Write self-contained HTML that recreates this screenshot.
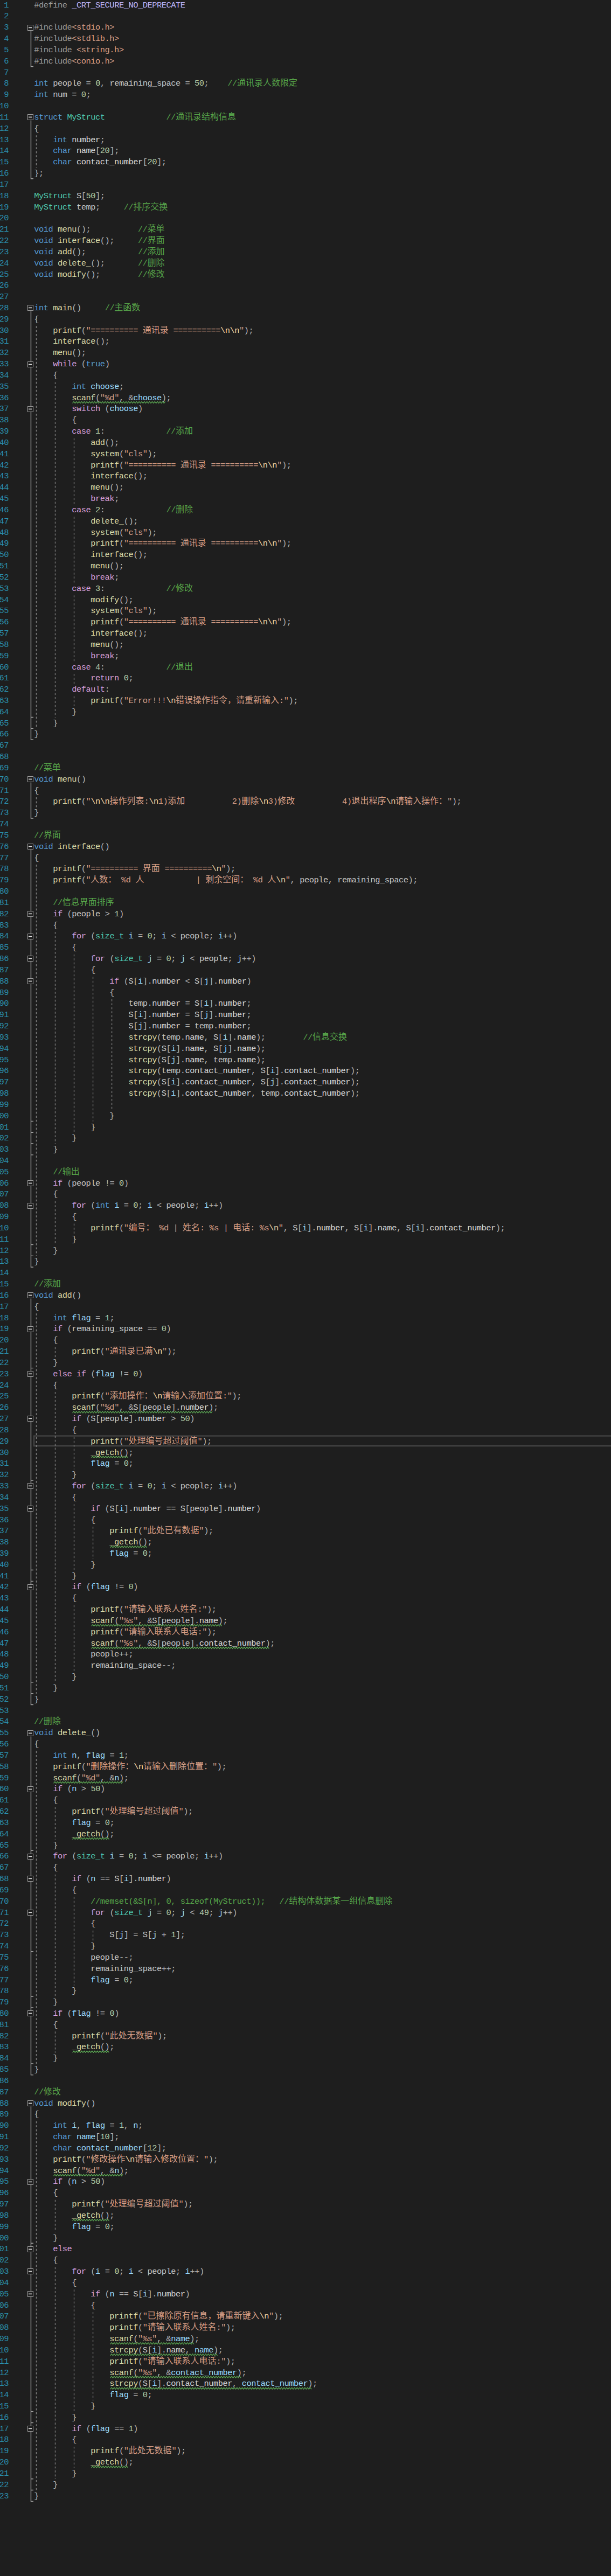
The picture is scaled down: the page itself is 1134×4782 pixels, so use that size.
<!DOCTYPE html>
<html lang="zh"><head><meta charset="utf-8"><title>code</title><style>
html,body{margin:0;padding:0;background:#1e1e1e;}
body{width:1134px;height:4782px;position:relative;overflow:hidden;font-family:"Liberation Mono","Noto Sans CJK SC",monospace;font-size:15.4px;letter-spacing:-0.4785px;color:#dcdcdc;}
svg{position:absolute;left:0;top:0;}
.r{position:absolute;left:0;height:20.829px;line-height:20.829px;white-space:pre;width:1134px;}
.ln{position:absolute;right:1118.03px;top:0;color:#2b91af;}
.cd{position:absolute;left:63.24px;top:0;}
.z{font-family:"Liberation Mono","Noto Sans CJK SC",sans-serif;font-size:16.0px;letter-spacing:0;line-height:0;}
.pp{color:#9b9b9b}.mac{color:#beb7ff}.s{color:#d69d85}.e{color:#f5d5a5}.c{color:#57a64a}
.k{color:#569cd6}.ct{color:#d8a0df}.t{color:#4ec9b0}.f{color:#dcdcaa}.l{color:#9cdcfe}
.g{color:#c8c8c8}.m{color:#dadada}.n{color:#b5cea8}.p{color:#b4b4b4}.d{color:#dcdcdc}
</style></head><body>
<svg width="1134" height="4782" viewBox="0 0 1134 4782"><rect x="63.1" y="2665.61" width="1200" height="18.6" fill="none" stroke="#464646" stroke-width="2.2"/>
<path d="M67.40 251.15V311.33M67.40 605.24V1352.79M102.45 709.39V1331.96M137.50 813.53V936.21M137.50 959.33V1082.01M137.50 1105.14V1227.81M137.50 1250.94V1269.47M137.50 1292.60V1311.13M67.40 1480.06V1498.59M67.40 1605.03V2331.75M102.45 1730.01V2123.46M137.50 1771.67V2102.63M172.56 1813.32V2081.80M207.61 1854.98V2060.97M102.45 2229.90V2310.92M137.50 2271.56V2290.09M67.40 2438.19V3144.08M102.45 2500.68V2519.21M102.45 2584.00V3123.25M137.50 2667.31V2727.50M137.50 2792.29V2914.96M172.56 2833.94V2894.13M137.50 2979.75V3102.42M67.40 3250.52V3831.44M102.45 3354.67V3414.86M102.45 3479.64V3706.46M137.50 3521.30V3685.63M172.56 3583.79V3602.32M102.45 3771.25V3810.61M67.40 3937.88V4622.94M102.45 4083.68V4143.87M102.45 4208.66V4602.11M137.50 4250.32V4477.14M172.56 4291.97V4456.31M137.50 4541.92V4581.28" stroke="#858585" stroke-width="1.3" stroke-dasharray="3.7 3.7" fill="none"/>
<path d="M57.45 57.60V123.47H62M57.45 223.60V331.76H62M57.45 577.60V1373.21H62M57.45 1452.60V1519.02H62M57.45 1577.60V2352.18H62M57.45 2410.60V3164.51H62M57.45 3223.60V3851.87H62M57.45 3910.60V4643.37H62M57.45 1352.38H62M57.45 1331.56H62M57.45 2143.89H62M57.45 2123.06H62M57.45 2102.23H62M57.45 2081.40H62M57.45 2331.35H62M57.45 2310.52H62M57.45 2539.64H62M57.45 3143.68H62M57.45 2747.93H62M57.45 2935.39H62M57.45 2914.56H62M57.45 3122.85H62M57.45 3435.29H62M57.45 3726.89H62M57.45 3706.06H62M57.45 3622.75H62M57.45 3831.04H62M57.45 4164.30H62M57.45 4622.54H62M57.45 4497.56H62M57.45 4476.73H62M57.45 4601.71H62" stroke="#a6a6a6" stroke-width="1.4" fill="none"/>
<rect x="51.50" y="46.50" width="10.00" height="10.00" fill="#1e1e1e" stroke="#a0a0a0" stroke-width="1"/>
<rect x="53.00" y="50.60" width="6.2" height="1.6" fill="#e4e4e4"/>
<rect x="51.50" y="212.50" width="10.00" height="10.00" fill="#1e1e1e" stroke="#a0a0a0" stroke-width="1"/>
<rect x="53.00" y="216.60" width="6.2" height="1.6" fill="#e4e4e4"/>
<rect x="51.50" y="566.50" width="10.00" height="10.00" fill="#1e1e1e" stroke="#a0a0a0" stroke-width="1"/>
<rect x="53.00" y="570.60" width="6.2" height="1.6" fill="#e4e4e4"/>
<rect x="51.50" y="671.50" width="10.00" height="10.00" fill="#1e1e1e" stroke="#a0a0a0" stroke-width="1"/>
<rect x="53.00" y="675.60" width="6.2" height="1.6" fill="#e4e4e4"/>
<rect x="51.50" y="754.50" width="10.00" height="10.00" fill="#1e1e1e" stroke="#a0a0a0" stroke-width="1"/>
<rect x="53.00" y="758.60" width="6.2" height="1.6" fill="#e4e4e4"/>
<rect x="51.50" y="1441.50" width="10.00" height="10.00" fill="#1e1e1e" stroke="#a0a0a0" stroke-width="1"/>
<rect x="53.00" y="1445.60" width="6.2" height="1.6" fill="#e4e4e4"/>
<rect x="51.50" y="1566.50" width="10.00" height="10.00" fill="#1e1e1e" stroke="#a0a0a0" stroke-width="1"/>
<rect x="53.00" y="1570.60" width="6.2" height="1.6" fill="#e4e4e4"/>
<rect x="51.50" y="1691.50" width="10.00" height="10.00" fill="#1e1e1e" stroke="#a0a0a0" stroke-width="1"/>
<rect x="53.00" y="1695.60" width="6.2" height="1.6" fill="#e4e4e4"/>
<rect x="51.50" y="1733.50" width="10.00" height="10.00" fill="#1e1e1e" stroke="#a0a0a0" stroke-width="1"/>
<rect x="53.00" y="1737.60" width="6.2" height="1.6" fill="#e4e4e4"/>
<rect x="51.50" y="1774.50" width="10.00" height="10.00" fill="#1e1e1e" stroke="#a0a0a0" stroke-width="1"/>
<rect x="53.00" y="1778.60" width="6.2" height="1.6" fill="#e4e4e4"/>
<rect x="51.50" y="1816.50" width="10.00" height="10.00" fill="#1e1e1e" stroke="#a0a0a0" stroke-width="1"/>
<rect x="53.00" y="1820.60" width="6.2" height="1.6" fill="#e4e4e4"/>
<rect x="51.50" y="2191.50" width="10.00" height="10.00" fill="#1e1e1e" stroke="#a0a0a0" stroke-width="1"/>
<rect x="53.00" y="2195.60" width="6.2" height="1.6" fill="#e4e4e4"/>
<rect x="51.50" y="2233.50" width="10.00" height="10.00" fill="#1e1e1e" stroke="#a0a0a0" stroke-width="1"/>
<rect x="53.00" y="2237.60" width="6.2" height="1.6" fill="#e4e4e4"/>
<rect x="51.50" y="2399.50" width="10.00" height="10.00" fill="#1e1e1e" stroke="#a0a0a0" stroke-width="1"/>
<rect x="53.00" y="2403.60" width="6.2" height="1.6" fill="#e4e4e4"/>
<rect x="51.50" y="2462.50" width="10.00" height="10.00" fill="#1e1e1e" stroke="#a0a0a0" stroke-width="1"/>
<rect x="53.00" y="2466.60" width="6.2" height="1.6" fill="#e4e4e4"/>
<rect x="51.50" y="2545.50" width="10.00" height="10.00" fill="#1e1e1e" stroke="#a0a0a0" stroke-width="1"/>
<rect x="53.00" y="2549.60" width="6.2" height="1.6" fill="#e4e4e4"/>
<rect x="51.50" y="2628.50" width="10.00" height="10.00" fill="#1e1e1e" stroke="#a0a0a0" stroke-width="1"/>
<rect x="53.00" y="2632.60" width="6.2" height="1.6" fill="#e4e4e4"/>
<rect x="51.50" y="2753.50" width="10.00" height="10.00" fill="#1e1e1e" stroke="#a0a0a0" stroke-width="1"/>
<rect x="53.00" y="2757.60" width="6.2" height="1.6" fill="#e4e4e4"/>
<rect x="51.50" y="2795.50" width="10.00" height="10.00" fill="#1e1e1e" stroke="#a0a0a0" stroke-width="1"/>
<rect x="53.00" y="2799.60" width="6.2" height="1.6" fill="#e4e4e4"/>
<rect x="51.50" y="2941.50" width="10.00" height="10.00" fill="#1e1e1e" stroke="#a0a0a0" stroke-width="1"/>
<rect x="53.00" y="2945.60" width="6.2" height="1.6" fill="#e4e4e4"/>
<rect x="51.50" y="3212.50" width="10.00" height="10.00" fill="#1e1e1e" stroke="#a0a0a0" stroke-width="1"/>
<rect x="53.00" y="3216.60" width="6.2" height="1.6" fill="#e4e4e4"/>
<rect x="51.50" y="3316.50" width="10.00" height="10.00" fill="#1e1e1e" stroke="#a0a0a0" stroke-width="1"/>
<rect x="53.00" y="3320.60" width="6.2" height="1.6" fill="#e4e4e4"/>
<rect x="51.50" y="3441.50" width="10.00" height="10.00" fill="#1e1e1e" stroke="#a0a0a0" stroke-width="1"/>
<rect x="53.00" y="3445.60" width="6.2" height="1.6" fill="#e4e4e4"/>
<rect x="51.50" y="3482.50" width="10.00" height="10.00" fill="#1e1e1e" stroke="#a0a0a0" stroke-width="1"/>
<rect x="53.00" y="3486.60" width="6.2" height="1.6" fill="#e4e4e4"/>
<rect x="51.50" y="3545.50" width="10.00" height="10.00" fill="#1e1e1e" stroke="#a0a0a0" stroke-width="1"/>
<rect x="53.00" y="3549.60" width="6.2" height="1.6" fill="#e4e4e4"/>
<rect x="51.50" y="3732.50" width="10.00" height="10.00" fill="#1e1e1e" stroke="#a0a0a0" stroke-width="1"/>
<rect x="53.00" y="3736.60" width="6.2" height="1.6" fill="#e4e4e4"/>
<rect x="51.50" y="3899.50" width="10.00" height="10.00" fill="#1e1e1e" stroke="#a0a0a0" stroke-width="1"/>
<rect x="53.00" y="3903.60" width="6.2" height="1.6" fill="#e4e4e4"/>
<rect x="51.50" y="4045.50" width="10.00" height="10.00" fill="#1e1e1e" stroke="#a0a0a0" stroke-width="1"/>
<rect x="53.00" y="4049.60" width="6.2" height="1.6" fill="#e4e4e4"/>
<rect x="51.50" y="4170.50" width="10.00" height="10.00" fill="#1e1e1e" stroke="#a0a0a0" stroke-width="1"/>
<rect x="53.00" y="4174.60" width="6.2" height="1.6" fill="#e4e4e4"/>
<rect x="51.50" y="4211.50" width="10.00" height="10.00" fill="#1e1e1e" stroke="#a0a0a0" stroke-width="1"/>
<rect x="53.00" y="4215.60" width="6.2" height="1.6" fill="#e4e4e4"/>
<rect x="51.50" y="4253.50" width="10.00" height="10.00" fill="#1e1e1e" stroke="#a0a0a0" stroke-width="1"/>
<rect x="53.00" y="4257.60" width="6.2" height="1.6" fill="#e4e4e4"/>
<rect x="51.50" y="4503.50" width="10.00" height="10.00" fill="#1e1e1e" stroke="#a0a0a0" stroke-width="1"/>
<rect x="53.00" y="4507.60" width="6.2" height="1.6" fill="#e4e4e4"/>
<path d="M134.54 748.51L136.97 745.31L139.39 748.51L141.82 745.31L144.24 748.51L146.67 745.31L149.09 748.51L151.52 745.31L153.94 748.51L156.37 745.31L158.79 748.51L161.22 745.31L163.64 748.51L166.07 745.31L168.49 748.51L170.92 745.31L173.34 748.51L175.77 745.31L178.19 748.51L180.62 745.31L183.04 748.51L185.47 745.31L187.89 748.51L190.32 745.31L192.74 748.51L195.17 745.31L197.59 748.51L200.02 745.31L202.44 748.51L204.87 745.31L207.29 748.51L209.72 745.31L212.14 748.51L214.57 745.31L216.99 748.51L219.42 745.31L221.84 748.51L224.27 745.31L226.69 748.51L229.12 745.31L231.54 748.51L233.97 745.31L236.39 748.51L238.82 745.31L241.24 748.51L243.67 745.31L246.09 748.51L248.52 745.31L250.94 748.51L253.37 745.31L255.79 748.51L258.22 745.31L260.64 748.51L263.07 745.31L265.49 748.51L267.92 745.31L270.34 748.51L272.77 745.31L275.19 748.51L277.62 745.31L280.04 748.51L282.47 745.31L284.89 748.51L287.32 745.31L289.74 748.51L292.17 745.31L294.59 748.51L297.02 745.31L299.44 748.51L301.87 745.31L304.29 748.51L306.72 745.31" stroke="#5aa552" stroke-width="1.25" fill="none" stroke-linejoin="round"/>
<path d="M134.54 2623.12L136.97 2619.93L139.39 2623.12L141.82 2619.93L144.24 2623.12L146.67 2619.93L149.09 2623.12L151.52 2619.93L153.94 2623.12L156.37 2619.93L158.79 2623.12L161.22 2619.93L163.64 2623.12L166.07 2619.93L168.49 2623.12L170.92 2619.93L173.34 2623.12L175.77 2619.93L178.19 2623.12L180.62 2619.93L183.04 2623.12L185.47 2619.93L187.89 2623.12L190.32 2619.93L192.74 2623.12L195.17 2619.93L197.59 2623.12L200.02 2619.93L202.44 2623.12L204.87 2619.93L207.29 2623.12L209.72 2619.93L212.14 2623.12L214.57 2619.93L216.99 2623.12L219.42 2619.93L221.84 2623.12L224.27 2619.93L226.69 2623.12L229.12 2619.93L231.54 2623.12L233.97 2619.93L236.39 2623.12L238.82 2619.93L241.24 2623.12L243.67 2619.93L246.09 2623.12L248.52 2619.93L250.94 2623.12L253.37 2619.93L255.79 2623.12L258.22 2619.93L260.64 2623.12L263.07 2619.93L265.49 2623.12L267.92 2619.93L270.34 2623.12L272.77 2619.93L275.19 2623.12L277.62 2619.93L280.04 2623.12L282.47 2619.93L284.89 2623.12L287.32 2619.93L289.74 2623.12L292.17 2619.93L294.59 2623.12L297.02 2619.93L299.44 2623.12L301.87 2619.93L304.29 2623.12L306.72 2619.93L309.14 2623.12L311.57 2619.93L313.99 2623.12L316.42 2619.93L318.84 2623.12L321.27 2619.93L323.69 2623.12L326.12 2619.93L328.54 2623.12L330.97 2619.93L333.39 2623.12L335.82 2619.93L338.24 2623.12L340.67 2619.93L343.09 2623.12L345.52 2619.93L347.94 2623.12L350.37 2619.93L352.79 2623.12L355.22 2619.93L357.64 2623.12L360.07 2619.93L362.49 2623.12L364.92 2619.93L367.34 2623.12L369.77 2619.93L372.19 2623.12L374.62 2619.93L377.04 2623.12L379.47 2619.93L381.89 2623.12L384.32 2619.93L386.74 2623.12L389.17 2619.93L391.59 2623.12L394.02 2619.93" stroke="#5aa552" stroke-width="1.25" fill="none" stroke-linejoin="round"/>
<path d="M169.60 2706.44L172.02 2703.24L174.45 2706.44L176.87 2703.24L179.30 2706.44L181.72 2703.24L184.15 2706.44L186.57 2703.24L189.00 2706.44L191.42 2703.24L193.85 2706.44L196.27 2703.24L198.70 2706.44L201.12 2703.24L203.55 2706.44L205.97 2703.24L208.40 2706.44L210.82 2703.24L213.25 2706.44L215.67 2703.24L218.10 2706.44L220.52 2703.24L222.95 2706.44L225.37 2703.24L227.80 2706.44L230.22 2703.24L232.65 2706.44L235.07 2703.24L237.50 2706.44" stroke="#5aa552" stroke-width="1.25" fill="none" stroke-linejoin="round"/>
<path d="M204.65 2873.07L207.07 2869.87L209.50 2873.07L211.92 2869.87L214.35 2873.07L216.77 2869.87L219.20 2873.07L221.62 2869.87L224.05 2873.07L226.47 2869.87L228.90 2873.07L231.32 2869.87L233.75 2873.07L236.17 2869.87L238.60 2873.07L241.02 2869.87L243.45 2873.07L245.87 2869.87L248.30 2873.07L250.72 2869.87L253.15 2873.07L255.57 2869.87L258.00 2873.07L260.42 2869.87L262.85 2873.07L265.27 2869.87L267.70 2873.07L270.12 2869.87L272.55 2873.07" stroke="#5aa552" stroke-width="1.25" fill="none" stroke-linejoin="round"/>
<path d="M169.60 3018.88L172.02 3015.68L174.45 3018.88L176.87 3015.68L179.30 3018.88L181.72 3015.68L184.15 3018.88L186.57 3015.68L189.00 3018.88L191.42 3015.68L193.85 3018.88L196.27 3015.68L198.70 3018.88L201.12 3015.68L203.55 3018.88L205.97 3015.68L208.40 3018.88L210.82 3015.68L213.25 3018.88L215.67 3015.68L218.10 3018.88L220.52 3015.68L222.95 3018.88L225.37 3015.68L227.80 3018.88L230.22 3015.68L232.65 3018.88L235.07 3015.68L237.50 3018.88L239.92 3015.68L242.35 3018.88L244.77 3015.68L247.20 3018.88L249.62 3015.68L252.05 3018.88L254.47 3015.68L256.90 3018.88L259.32 3015.68L261.75 3018.88L264.17 3015.68L266.60 3018.88L269.02 3015.68L271.45 3018.88L273.87 3015.68L276.30 3018.88L278.72 3015.68L281.15 3018.88L283.57 3015.68L286.00 3018.88L288.42 3015.68L290.85 3018.88L293.27 3015.68L295.70 3018.88L298.12 3015.68L300.55 3018.88L302.97 3015.68L305.40 3018.88L307.82 3015.68L310.25 3018.88L312.67 3015.68L315.10 3018.88L317.52 3015.68L319.95 3018.88L322.37 3015.68L324.80 3018.88L327.22 3015.68L329.65 3018.88L332.07 3015.68L334.50 3018.88L336.92 3015.68L339.35 3018.88L341.77 3015.68L344.20 3018.88L346.62 3015.68L349.05 3018.88L351.47 3015.68L353.90 3018.88L356.32 3015.68L358.75 3018.88L361.17 3015.68L363.60 3018.88L366.02 3015.68L368.45 3018.88L370.87 3015.68L373.30 3018.88L375.72 3015.68L378.15 3018.88L380.57 3015.68L383.00 3018.88L385.42 3015.68L387.85 3018.88L390.27 3015.68L392.70 3018.88L395.12 3015.68L397.55 3018.88L399.97 3015.68L402.40 3018.88L404.82 3015.68L407.25 3018.88L409.67 3015.68L412.10 3018.88" stroke="#5aa552" stroke-width="1.25" fill="none" stroke-linejoin="round"/>
<path d="M169.60 3060.53L172.02 3057.33L174.45 3060.53L176.87 3057.33L179.30 3060.53L181.72 3057.33L184.15 3060.53L186.57 3057.33L189.00 3060.53L191.42 3057.33L193.85 3060.53L196.27 3057.33L198.70 3060.53L201.12 3057.33L203.55 3060.53L205.97 3057.33L208.40 3060.53L210.82 3057.33L213.25 3060.53L215.67 3057.33L218.10 3060.53L220.52 3057.33L222.95 3060.53L225.37 3057.33L227.80 3060.53L230.22 3057.33L232.65 3060.53L235.07 3057.33L237.50 3060.53L239.92 3057.33L242.35 3060.53L244.77 3057.33L247.20 3060.53L249.62 3057.33L252.05 3060.53L254.47 3057.33L256.90 3060.53L259.32 3057.33L261.75 3060.53L264.17 3057.33L266.60 3060.53L269.02 3057.33L271.45 3060.53L273.87 3057.33L276.30 3060.53L278.72 3057.33L281.15 3060.53L283.57 3057.33L286.00 3060.53L288.42 3057.33L290.85 3060.53L293.27 3057.33L295.70 3060.53L298.12 3057.33L300.55 3060.53L302.97 3057.33L305.40 3060.53L307.82 3057.33L310.25 3060.53L312.67 3057.33L315.10 3060.53L317.52 3057.33L319.95 3060.53L322.37 3057.33L324.80 3060.53L327.22 3057.33L329.65 3060.53L332.07 3057.33L334.50 3060.53L336.92 3057.33L339.35 3060.53L341.77 3057.33L344.20 3060.53L346.62 3057.33L349.05 3060.53L351.47 3057.33L353.90 3060.53L356.32 3057.33L358.75 3060.53L361.17 3057.33L363.60 3060.53L366.02 3057.33L368.45 3060.53L370.87 3057.33L373.30 3060.53L375.72 3057.33L378.15 3060.53L380.57 3057.33L383.00 3060.53L385.42 3057.33L387.85 3060.53L390.27 3057.33L392.70 3060.53L395.12 3057.33L397.55 3060.53L399.97 3057.33L402.40 3060.53L404.82 3057.33L407.25 3060.53L409.67 3057.33L412.10 3060.53L414.52 3057.33L416.95 3060.53L419.37 3057.33L421.80 3060.53L424.22 3057.33L426.65 3060.53L429.07 3057.33L431.50 3060.53L433.92 3057.33L436.35 3060.53L438.77 3057.33L441.20 3060.53L443.62 3057.33L446.05 3060.53L448.47 3057.33L450.90 3060.53L453.32 3057.33L455.75 3060.53L458.17 3057.33L460.60 3060.53L463.02 3057.33L465.45 3060.53L467.87 3057.33L470.30 3060.53L472.72 3057.33L475.15 3060.53L477.57 3057.33L480.00 3060.53L482.42 3057.33L484.85 3060.53L487.27 3057.33L489.70 3060.53L492.12 3057.33L494.55 3060.53L496.97 3057.33L499.40 3060.53" stroke="#5aa552" stroke-width="1.25" fill="none" stroke-linejoin="round"/>
<path d="M99.49 3310.48L101.92 3307.28L104.34 3310.48L106.77 3307.28L109.19 3310.48L111.62 3307.28L114.04 3310.48L116.47 3307.28L118.89 3310.48L121.32 3307.28L123.74 3310.48L126.17 3307.28L128.59 3310.48L131.02 3307.28L133.44 3310.48L135.87 3307.28L138.29 3310.48L140.72 3307.28L143.14 3310.48L145.57 3307.28L147.99 3310.48L150.42 3307.28L152.84 3310.48L155.27 3307.28L157.69 3310.48L160.12 3307.28L162.54 3310.48L164.97 3307.28L167.39 3310.48L169.82 3307.28L172.24 3310.48L174.67 3307.28L177.09 3310.48L179.52 3307.28L181.94 3310.48L184.37 3307.28L186.79 3310.48L189.22 3307.28L191.64 3310.48L194.07 3307.28L196.49 3310.48L198.92 3307.28L201.34 3310.48L203.77 3307.28L206.19 3310.48L208.62 3307.28L211.04 3310.48L213.47 3307.28L215.89 3310.48L218.32 3307.28L220.74 3310.48L223.17 3307.28L225.59 3310.48L228.02 3307.28" stroke="#5aa552" stroke-width="1.25" fill="none" stroke-linejoin="round"/>
<path d="M134.54 3414.63L136.97 3411.43L139.39 3414.63L141.82 3411.43L144.24 3414.63L146.67 3411.43L149.09 3414.63L151.52 3411.43L153.94 3414.63L156.37 3411.43L158.79 3414.63L161.22 3411.43L163.64 3414.63L166.07 3411.43L168.49 3414.63L170.92 3411.43L173.34 3414.63L175.77 3411.43L178.19 3414.63L180.62 3411.43L183.04 3414.63L185.47 3411.43L187.89 3414.63L190.32 3411.43L192.74 3414.63L195.17 3411.43L197.59 3414.63L200.02 3411.43L202.44 3414.63" stroke="#5aa552" stroke-width="1.25" fill="none" stroke-linejoin="round"/>
<path d="M134.54 3810.38L136.97 3807.18L139.39 3810.38L141.82 3807.18L144.24 3810.38L146.67 3807.18L149.09 3810.38L151.52 3807.18L153.94 3810.38L156.37 3807.18L158.79 3810.38L161.22 3807.18L163.64 3810.38L166.07 3807.18L168.49 3810.38L170.92 3807.18L173.34 3810.38L175.77 3807.18L178.19 3810.38L180.62 3807.18L183.04 3810.38L185.47 3807.18L187.89 3810.38L190.32 3807.18L192.74 3810.38L195.17 3807.18L197.59 3810.38L200.02 3807.18L202.44 3810.38" stroke="#5aa552" stroke-width="1.25" fill="none" stroke-linejoin="round"/>
<path d="M99.49 4039.50L101.92 4036.30L104.34 4039.50L106.77 4036.30L109.19 4039.50L111.62 4036.30L114.04 4039.50L116.47 4036.30L118.89 4039.50L121.32 4036.30L123.74 4039.50L126.17 4036.30L128.59 4039.50L131.02 4036.30L133.44 4039.50L135.87 4036.30L138.29 4039.50L140.72 4036.30L143.14 4039.50L145.57 4036.30L147.99 4039.50L150.42 4036.30L152.84 4039.50L155.27 4036.30L157.69 4039.50L160.12 4036.30L162.54 4039.50L164.97 4036.30L167.39 4039.50L169.82 4036.30L172.24 4039.50L174.67 4036.30L177.09 4039.50L179.52 4036.30L181.94 4039.50L184.37 4036.30L186.79 4039.50L189.22 4036.30L191.64 4039.50L194.07 4036.30L196.49 4039.50L198.92 4036.30L201.34 4039.50L203.77 4036.30L206.19 4039.50L208.62 4036.30L211.04 4039.50L213.47 4036.30L215.89 4039.50L218.32 4036.30L220.74 4039.50L223.17 4036.30L225.59 4039.50L228.02 4036.30" stroke="#5aa552" stroke-width="1.25" fill="none" stroke-linejoin="round"/>
<path d="M134.54 4122.81L136.97 4119.61L139.39 4122.81L141.82 4119.61L144.24 4122.81L146.67 4119.61L149.09 4122.81L151.52 4119.61L153.94 4122.81L156.37 4119.61L158.79 4122.81L161.22 4119.61L163.64 4122.81L166.07 4119.61L168.49 4122.81L170.92 4119.61L173.34 4122.81L175.77 4119.61L178.19 4122.81L180.62 4119.61L183.04 4122.81L185.47 4119.61L187.89 4122.81L190.32 4119.61L192.74 4122.81L195.17 4119.61L197.59 4122.81L200.02 4119.61L202.44 4122.81" stroke="#5aa552" stroke-width="1.25" fill="none" stroke-linejoin="round"/>
<path d="M204.65 4351.93L207.07 4348.73L209.50 4351.93L211.92 4348.73L214.35 4351.93L216.77 4348.73L219.20 4351.93L221.62 4348.73L224.05 4351.93L226.47 4348.73L228.90 4351.93L231.32 4348.73L233.75 4351.93L236.17 4348.73L238.60 4351.93L241.02 4348.73L243.45 4351.93L245.87 4348.73L248.30 4351.93L250.72 4348.73L253.15 4351.93L255.57 4348.73L258.00 4351.93L260.42 4348.73L262.85 4351.93L265.27 4348.73L267.70 4351.93L270.12 4348.73L272.55 4351.93L274.97 4348.73L277.40 4351.93L279.82 4348.73L282.25 4351.93L284.67 4348.73L287.10 4351.93L289.52 4348.73L291.95 4351.93L294.37 4348.73L296.80 4351.93L299.22 4348.73L301.65 4351.93L304.07 4348.73L306.50 4351.93L308.92 4348.73L311.35 4351.93L313.77 4348.73L316.20 4351.93L318.62 4348.73L321.05 4351.93L323.47 4348.73L325.90 4351.93L328.32 4348.73L330.75 4351.93L333.17 4348.73L335.60 4351.93L338.02 4348.73L340.45 4351.93L342.87 4348.73L345.30 4351.93L347.72 4348.73L350.15 4351.93L352.57 4348.73L355.00 4351.93L357.42 4348.73L359.85 4351.93" stroke="#5aa552" stroke-width="1.25" fill="none" stroke-linejoin="round"/>
<path d="M204.65 4372.76L207.07 4369.56L209.50 4372.76L211.92 4369.56L214.35 4372.76L216.77 4369.56L219.20 4372.76L221.62 4369.56L224.05 4372.76L226.47 4369.56L228.90 4372.76L231.32 4369.56L233.75 4372.76L236.17 4369.56L238.60 4372.76L241.02 4369.56L243.45 4372.76L245.87 4369.56L248.30 4372.76L250.72 4369.56L253.15 4372.76L255.57 4369.56L258.00 4372.76L260.42 4369.56L262.85 4372.76L265.27 4369.56L267.70 4372.76L270.12 4369.56L272.55 4372.76L274.97 4369.56L277.40 4372.76L279.82 4369.56L282.25 4372.76L284.67 4369.56L287.10 4372.76L289.52 4369.56L291.95 4372.76L294.37 4369.56L296.80 4372.76L299.22 4369.56L301.65 4372.76L304.07 4369.56L306.50 4372.76L308.92 4369.56L311.35 4372.76L313.77 4369.56L316.20 4372.76L318.62 4369.56L321.05 4372.76L323.47 4369.56L325.90 4372.76L328.32 4369.56L330.75 4372.76L333.17 4369.56L335.60 4372.76L338.02 4369.56L340.45 4372.76L342.87 4369.56L345.30 4372.76L347.72 4369.56L350.15 4372.76L352.57 4369.56L355.00 4372.76L357.42 4369.56L359.85 4372.76L362.27 4369.56L364.70 4372.76L367.12 4369.56L369.55 4372.76L371.97 4369.56L374.40 4372.76L376.82 4369.56L379.25 4372.76L381.67 4369.56L384.10 4372.76L386.52 4369.56L388.95 4372.76L391.37 4369.56L393.80 4372.76L396.22 4369.56L398.65 4372.76L401.07 4369.56L403.50 4372.76" stroke="#5aa552" stroke-width="1.25" fill="none" stroke-linejoin="round"/>
<path d="M204.65 4414.42L207.07 4411.22L209.50 4414.42L211.92 4411.22L214.35 4414.42L216.77 4411.22L219.20 4414.42L221.62 4411.22L224.05 4414.42L226.47 4411.22L228.90 4414.42L231.32 4411.22L233.75 4414.42L236.17 4411.22L238.60 4414.42L241.02 4411.22L243.45 4414.42L245.87 4411.22L248.30 4414.42L250.72 4411.22L253.15 4414.42L255.57 4411.22L258.00 4414.42L260.42 4411.22L262.85 4414.42L265.27 4411.22L267.70 4414.42L270.12 4411.22L272.55 4414.42L274.97 4411.22L277.40 4414.42L279.82 4411.22L282.25 4414.42L284.67 4411.22L287.10 4414.42L289.52 4411.22L291.95 4414.42L294.37 4411.22L296.80 4414.42L299.22 4411.22L301.65 4414.42L304.07 4411.22L306.50 4414.42L308.92 4411.22L311.35 4414.42L313.77 4411.22L316.20 4414.42L318.62 4411.22L321.05 4414.42L323.47 4411.22L325.90 4414.42L328.32 4411.22L330.75 4414.42L333.17 4411.22L335.60 4414.42L338.02 4411.22L340.45 4414.42L342.87 4411.22L345.30 4414.42L347.72 4411.22L350.15 4414.42L352.57 4411.22L355.00 4414.42L357.42 4411.22L359.85 4414.42L362.27 4411.22L364.70 4414.42L367.12 4411.22L369.55 4414.42L371.97 4411.22L374.40 4414.42L376.82 4411.22L379.25 4414.42L381.67 4411.22L384.10 4414.42L386.52 4411.22L388.95 4414.42L391.37 4411.22L393.80 4414.42L396.22 4411.22L398.65 4414.42L401.07 4411.22L403.50 4414.42L405.92 4411.22L408.35 4414.42L410.77 4411.22L413.20 4414.42L415.62 4411.22L418.05 4414.42L420.47 4411.22L422.90 4414.42L425.32 4411.22L427.75 4414.42L430.17 4411.22L432.60 4414.42L435.02 4411.22L437.45 4414.42L439.87 4411.22L442.30 4414.42L444.72 4411.22L447.15 4414.42" stroke="#5aa552" stroke-width="1.25" fill="none" stroke-linejoin="round"/>
<path d="M204.65 4435.25L207.07 4432.05L209.50 4435.25L211.92 4432.05L214.35 4435.25L216.77 4432.05L219.20 4435.25L221.62 4432.05L224.05 4435.25L226.47 4432.05L228.90 4435.25L231.32 4432.05L233.75 4435.25L236.17 4432.05L238.60 4435.25L241.02 4432.05L243.45 4435.25L245.87 4432.05L248.30 4435.25L250.72 4432.05L253.15 4435.25L255.57 4432.05L258.00 4435.25L260.42 4432.05L262.85 4435.25L265.27 4432.05L267.70 4435.25L270.12 4432.05L272.55 4435.25L274.97 4432.05L277.40 4435.25L279.82 4432.05L282.25 4435.25L284.67 4432.05L287.10 4435.25L289.52 4432.05L291.95 4435.25L294.37 4432.05L296.80 4435.25L299.22 4432.05L301.65 4435.25L304.07 4432.05L306.50 4435.25L308.92 4432.05L311.35 4435.25L313.77 4432.05L316.20 4435.25L318.62 4432.05L321.05 4435.25L323.47 4432.05L325.90 4435.25L328.32 4432.05L330.75 4435.25L333.17 4432.05L335.60 4435.25L338.02 4432.05L340.45 4435.25L342.87 4432.05L345.30 4435.25L347.72 4432.05L350.15 4435.25L352.57 4432.05L355.00 4435.25L357.42 4432.05L359.85 4435.25L362.27 4432.05L364.70 4435.25L367.12 4432.05L369.55 4435.25L371.97 4432.05L374.40 4435.25L376.82 4432.05L379.25 4435.25L381.67 4432.05L384.10 4435.25L386.52 4432.05L388.95 4435.25L391.37 4432.05L393.80 4435.25L396.22 4432.05L398.65 4435.25L401.07 4432.05L403.50 4435.25L405.92 4432.05L408.35 4435.25L410.77 4432.05L413.20 4435.25L415.62 4432.05L418.05 4435.25L420.47 4432.05L422.90 4435.25L425.32 4432.05L427.75 4435.25L430.17 4432.05L432.60 4435.25L435.02 4432.05L437.45 4435.25L439.87 4432.05L442.30 4435.25L444.72 4432.05L447.15 4435.25L449.57 4432.05L452.00 4435.25L454.42 4432.05L456.85 4435.25L459.27 4432.05L461.70 4435.25L464.12 4432.05L466.55 4435.25L468.97 4432.05L471.40 4435.25L473.82 4432.05L476.25 4435.25L478.67 4432.05L481.10 4435.25L483.52 4432.05L485.95 4435.25L488.37 4432.05L490.80 4435.25L493.22 4432.05L495.65 4435.25L498.07 4432.05L500.50 4435.25L502.92 4432.05L505.35 4435.25L507.77 4432.05L510.20 4435.25L512.62 4432.05L515.05 4435.25L517.47 4432.05L519.90 4435.25L522.32 4432.05L524.75 4435.25L527.17 4432.05L529.60 4435.25L532.02 4432.05L534.45 4435.25L536.87 4432.05L539.30 4435.25L541.72 4432.05L544.15 4435.25L546.57 4432.05L549.00 4435.25L551.42 4432.05L553.85 4435.25L556.27 4432.05L558.70 4435.25L561.12 4432.05L563.55 4435.25L565.97 4432.05L568.40 4435.25L570.82 4432.05L573.25 4435.25L575.67 4432.05L578.10 4435.25" stroke="#5aa552" stroke-width="1.25" fill="none" stroke-linejoin="round"/>
<path d="M169.60 4581.05L172.02 4577.85L174.45 4581.05L176.87 4577.85L179.30 4581.05L181.72 4577.85L184.15 4581.05L186.57 4577.85L189.00 4581.05L191.42 4577.85L193.85 4581.05L196.27 4577.85L198.70 4581.05L201.12 4577.85L203.55 4581.05L205.97 4577.85L208.40 4581.05L210.82 4577.85L213.25 4581.05L215.67 4577.85L218.10 4581.05L220.52 4577.85L222.95 4581.05L225.37 4577.85L227.80 4581.05L230.22 4577.85L232.65 4581.05L235.07 4577.85L237.50 4581.05" stroke="#5aa552" stroke-width="1.25" fill="none" stroke-linejoin="round"/></svg>
<div class="r" style="top:-0.40px"><span class="ln">1</span><span class="cd"><span class="pp">#define</span> <span class="mac">_CRT_SECURE_NO_DEPRECATE</span></span></div>
<div class="r" style="top:20.43px"><span class="ln">2</span><span class="cd"></span></div>
<div class="r" style="top:41.26px"><span class="ln">3</span><span class="cd"><span class="pp">#include</span><span class="s">&lt;stdio.h&gt;</span></span></div>
<div class="r" style="top:62.09px"><span class="ln">4</span><span class="cd"><span class="pp">#include</span><span class="s">&lt;stdlib.h&gt;</span></span></div>
<div class="r" style="top:82.92px"><span class="ln">5</span><span class="cd"><span class="pp">#include</span> <span class="s">&lt;string.h&gt;</span></span></div>
<div class="r" style="top:103.75px"><span class="ln">6</span><span class="cd"><span class="pp">#include</span><span class="s">&lt;conio.h&gt;</span></span></div>
<div class="r" style="top:124.57px"><span class="ln">7</span><span class="cd"></span></div>
<div class="r" style="top:145.40px"><span class="ln">8</span><span class="cd"><span class="k">int</span> <span class="g">people</span> <span class="p">=</span> <span class="n">0</span><span class="p">,</span> <span class="g">remaining_space</span> <span class="p">=</span> <span class="n">50</span><span class="p">;</span>    <span class="c">//<span class="z">通讯录人数限定</span></span></span></div>
<div class="r" style="top:166.23px"><span class="ln">9</span><span class="cd"><span class="k">int</span> <span class="g">num</span> <span class="p">=</span> <span class="n">0</span><span class="p">;</span></span></div>
<div class="r" style="top:187.06px"><span class="ln">10</span><span class="cd"></span></div>
<div class="r" style="top:207.89px"><span class="ln">11</span><span class="cd"><span class="k">struct</span> <span class="t">MyStruct</span>             <span class="c">//<span class="z">通讯录结构信息</span></span></span></div>
<div class="r" style="top:228.72px"><span class="ln">12</span><span class="cd"><span class="p">{</span></span></div>
<div class="r" style="top:249.55px"><span class="ln">13</span><span class="cd">    <span class="k">int</span> <span class="m">number</span><span class="p">;</span></span></div>
<div class="r" style="top:270.38px"><span class="ln">14</span><span class="cd">    <span class="k">char</span> <span class="m">name</span><span class="p">[</span><span class="n">20</span><span class="p">];</span></span></div>
<div class="r" style="top:291.21px"><span class="ln">15</span><span class="cd">    <span class="k">char</span> <span class="m">contact_number</span><span class="p">[</span><span class="n">20</span><span class="p">];</span></span></div>
<div class="r" style="top:312.04px"><span class="ln">16</span><span class="cd"><span class="p">};</span></span></div>
<div class="r" style="top:332.86px"><span class="ln">17</span><span class="cd"></span></div>
<div class="r" style="top:353.69px"><span class="ln">18</span><span class="cd"><span class="t">MyStruct</span> <span class="g">S</span><span class="p">[</span><span class="n">50</span><span class="p">];</span></span></div>
<div class="r" style="top:374.52px"><span class="ln">19</span><span class="cd"><span class="t">MyStruct</span> <span class="g">temp</span><span class="p">;</span>     <span class="c">//<span class="z">排序交换</span></span></span></div>
<div class="r" style="top:395.35px"><span class="ln">20</span><span class="cd"></span></div>
<div class="r" style="top:416.18px"><span class="ln">21</span><span class="cd"><span class="k">void</span> <span class="f">menu</span><span class="p">();</span>          <span class="c">//<span class="z">菜单</span></span></span></div>
<div class="r" style="top:437.01px"><span class="ln">22</span><span class="cd"><span class="k">void</span> <span class="f">interface</span><span class="p">();</span>     <span class="c">//<span class="z">界面</span></span></span></div>
<div class="r" style="top:457.84px"><span class="ln">23</span><span class="cd"><span class="k">void</span> <span class="f">add</span><span class="p">();</span>           <span class="c">//<span class="z">添加</span></span></span></div>
<div class="r" style="top:478.67px"><span class="ln">24</span><span class="cd"><span class="k">void</span> <span class="f">delete_</span><span class="p">();</span>       <span class="c">//<span class="z">删除</span></span></span></div>
<div class="r" style="top:499.50px"><span class="ln">25</span><span class="cd"><span class="k">void</span> <span class="f">modify</span><span class="p">();</span>        <span class="c">//<span class="z">修改</span></span></span></div>
<div class="r" style="top:520.33px"><span class="ln">26</span><span class="cd"></span></div>
<div class="r" style="top:541.15px"><span class="ln">27</span><span class="cd"></span></div>
<div class="r" style="top:561.98px"><span class="ln">28</span><span class="cd"><span class="k">int</span> <span class="f">main</span><span class="p">()</span>     <span class="c">//<span class="z">主函数</span></span></span></div>
<div class="r" style="top:582.81px"><span class="ln">29</span><span class="cd"><span class="p">{</span></span></div>
<div class="r" style="top:603.64px"><span class="ln">30</span><span class="cd">    <span class="f">printf</span><span class="p">(</span><span class="s">"========== <span class="z">通讯录</span> ==========</span><span class="e">\n\n</span><span class="s">"</span><span class="p">);</span></span></div>
<div class="r" style="top:624.47px"><span class="ln">31</span><span class="cd">    <span class="f">interface</span><span class="p">();</span></span></div>
<div class="r" style="top:645.30px"><span class="ln">32</span><span class="cd">    <span class="f">menu</span><span class="p">();</span></span></div>
<div class="r" style="top:666.13px"><span class="ln">33</span><span class="cd">    <span class="ct">while</span> <span class="p">(</span><span class="k">true</span><span class="p">)</span></span></div>
<div class="r" style="top:686.96px"><span class="ln">34</span><span class="cd">    <span class="p">{</span></span></div>
<div class="r" style="top:707.79px"><span class="ln">35</span><span class="cd">        <span class="k">int</span> <span class="l">choose</span><span class="p">;</span></span></div>
<div class="r" style="top:728.62px"><span class="ln">36</span><span class="cd">        <span class="f">scanf</span><span class="p">(</span><span class="s">"%d"</span><span class="p">,</span> <span class="p">&amp;</span><span class="l">choose</span><span class="p">);</span></span></div>
<div class="r" style="top:749.44px"><span class="ln">37</span><span class="cd">        <span class="ct">switch</span> <span class="p">(</span><span class="l">choose</span><span class="p">)</span></span></div>
<div class="r" style="top:770.27px"><span class="ln">38</span><span class="cd">        <span class="p">{</span></span></div>
<div class="r" style="top:791.10px"><span class="ln">39</span><span class="cd">        <span class="ct">case</span> <span class="n">1</span><span class="p">:</span>             <span class="c">//<span class="z">添加</span></span></span></div>
<div class="r" style="top:811.93px"><span class="ln">40</span><span class="cd">            <span class="f">add</span><span class="p">();</span></span></div>
<div class="r" style="top:832.76px"><span class="ln">41</span><span class="cd">            <span class="f">system</span><span class="p">(</span><span class="s">"cls"</span><span class="p">);</span></span></div>
<div class="r" style="top:853.59px"><span class="ln">42</span><span class="cd">            <span class="f">printf</span><span class="p">(</span><span class="s">"========== <span class="z">通讯录</span> ==========</span><span class="e">\n\n</span><span class="s">"</span><span class="p">);</span></span></div>
<div class="r" style="top:874.42px"><span class="ln">43</span><span class="cd">            <span class="f">interface</span><span class="p">();</span></span></div>
<div class="r" style="top:895.25px"><span class="ln">44</span><span class="cd">            <span class="f">menu</span><span class="p">();</span></span></div>
<div class="r" style="top:916.08px"><span class="ln">45</span><span class="cd">            <span class="ct">break</span><span class="p">;</span></span></div>
<div class="r" style="top:936.91px"><span class="ln">46</span><span class="cd">        <span class="ct">case</span> <span class="n">2</span><span class="p">:</span>             <span class="c">//<span class="z">删除</span></span></span></div>
<div class="r" style="top:957.73px"><span class="ln">47</span><span class="cd">            <span class="f">delete_</span><span class="p">();</span></span></div>
<div class="r" style="top:978.56px"><span class="ln">48</span><span class="cd">            <span class="f">system</span><span class="p">(</span><span class="s">"cls"</span><span class="p">);</span></span></div>
<div class="r" style="top:999.39px"><span class="ln">49</span><span class="cd">            <span class="f">printf</span><span class="p">(</span><span class="s">"========== <span class="z">通讯录</span> ==========</span><span class="e">\n\n</span><span class="s">"</span><span class="p">);</span></span></div>
<div class="r" style="top:1020.22px"><span class="ln">50</span><span class="cd">            <span class="f">interface</span><span class="p">();</span></span></div>
<div class="r" style="top:1041.05px"><span class="ln">51</span><span class="cd">            <span class="f">menu</span><span class="p">();</span></span></div>
<div class="r" style="top:1061.88px"><span class="ln">52</span><span class="cd">            <span class="ct">break</span><span class="p">;</span></span></div>
<div class="r" style="top:1082.71px"><span class="ln">53</span><span class="cd">        <span class="ct">case</span> <span class="n">3</span><span class="p">:</span>             <span class="c">//<span class="z">修改</span></span></span></div>
<div class="r" style="top:1103.54px"><span class="ln">54</span><span class="cd">            <span class="f">modify</span><span class="p">();</span></span></div>
<div class="r" style="top:1124.37px"><span class="ln">55</span><span class="cd">            <span class="f">system</span><span class="p">(</span><span class="s">"cls"</span><span class="p">);</span></span></div>
<div class="r" style="top:1145.19px"><span class="ln">56</span><span class="cd">            <span class="f">printf</span><span class="p">(</span><span class="s">"========== <span class="z">通讯录</span> ==========</span><span class="e">\n\n</span><span class="s">"</span><span class="p">);</span></span></div>
<div class="r" style="top:1166.02px"><span class="ln">57</span><span class="cd">            <span class="f">interface</span><span class="p">();</span></span></div>
<div class="r" style="top:1186.85px"><span class="ln">58</span><span class="cd">            <span class="f">menu</span><span class="p">();</span></span></div>
<div class="r" style="top:1207.68px"><span class="ln">59</span><span class="cd">            <span class="ct">break</span><span class="p">;</span></span></div>
<div class="r" style="top:1228.51px"><span class="ln">60</span><span class="cd">        <span class="ct">case</span> <span class="n">4</span><span class="p">:</span>             <span class="c">//<span class="z">退出</span></span></span></div>
<div class="r" style="top:1249.34px"><span class="ln">61</span><span class="cd">            <span class="ct">return</span> <span class="n">0</span><span class="p">;</span></span></div>
<div class="r" style="top:1270.17px"><span class="ln">62</span><span class="cd">        <span class="ct">default</span><span class="p">:</span></span></div>
<div class="r" style="top:1291.00px"><span class="ln">63</span><span class="cd">            <span class="f">printf</span><span class="p">(</span><span class="s">"Error!!!</span><span class="e">\n</span><span class="s"><span class="z">错误操作指令，请重新输入</span>:"</span><span class="p">);</span></span></div>
<div class="r" style="top:1311.83px"><span class="ln">64</span><span class="cd">        <span class="p">}</span></span></div>
<div class="r" style="top:1332.66px"><span class="ln">65</span><span class="cd">    <span class="p">}</span></span></div>
<div class="r" style="top:1353.48px"><span class="ln">66</span><span class="cd"><span class="p">}</span></span></div>
<div class="r" style="top:1374.31px"><span class="ln">67</span><span class="cd"></span></div>
<div class="r" style="top:1395.14px"><span class="ln">68</span><span class="cd"></span></div>
<div class="r" style="top:1415.97px"><span class="ln">69</span><span class="cd"><span class="c">//<span class="z">菜单</span></span></span></div>
<div class="r" style="top:1436.80px"><span class="ln">70</span><span class="cd"><span class="k">void</span> <span class="f">menu</span><span class="p">()</span></span></div>
<div class="r" style="top:1457.63px"><span class="ln">71</span><span class="cd"><span class="p">{</span></span></div>
<div class="r" style="top:1478.46px"><span class="ln">72</span><span class="cd">    <span class="f">printf</span><span class="p">(</span><span class="s">"</span><span class="e">\n\n</span><span class="s"><span class="z">操作列表</span>:</span><span class="e">\n</span><span class="s">1)<span class="z">添加</span>          2)<span class="z">删除</span></span><span class="e">\n</span><span class="s">3)<span class="z">修改</span>          4)<span class="z">退出程序</span></span><span class="e">\n</span><span class="s"><span class="z">请输入操作：</span>"</span><span class="p">);</span></span></div>
<div class="r" style="top:1499.29px"><span class="ln">73</span><span class="cd"><span class="p">}</span></span></div>
<div class="r" style="top:1520.12px"><span class="ln">74</span><span class="cd"></span></div>
<div class="r" style="top:1540.95px"><span class="ln">75</span><span class="cd"><span class="c">//<span class="z">界面</span></span></span></div>
<div class="r" style="top:1561.77px"><span class="ln">76</span><span class="cd"><span class="k">void</span> <span class="f">interface</span><span class="p">()</span></span></div>
<div class="r" style="top:1582.60px"><span class="ln">77</span><span class="cd"><span class="p">{</span></span></div>
<div class="r" style="top:1603.43px"><span class="ln">78</span><span class="cd">    <span class="f">printf</span><span class="p">(</span><span class="s">"========== <span class="z">界面</span> ==========</span><span class="e">\n</span><span class="s">"</span><span class="p">);</span></span></div>
<div class="r" style="top:1624.26px"><span class="ln">79</span><span class="cd">    <span class="f">printf</span><span class="p">(</span><span class="s">"<span class="z">人数：</span> %d <span class="z">人</span>           | <span class="z">剩余空间：</span> %d <span class="z">人</span></span><span class="e">\n</span><span class="s">"</span><span class="p">,</span> <span class="g">people</span><span class="p">,</span> <span class="g">remaining_space</span><span class="p">);</span></span></div>
<div class="r" style="top:1645.09px"><span class="ln">80</span><span class="cd"></span></div>
<div class="r" style="top:1665.92px"><span class="ln">81</span><span class="cd">    <span class="c">//<span class="z">信息界面排序</span></span></span></div>
<div class="r" style="top:1686.75px"><span class="ln">82</span><span class="cd">    <span class="ct">if</span> <span class="p">(</span><span class="g">people</span> <span class="p">&gt;</span> <span class="n">1</span><span class="p">)</span></span></div>
<div class="r" style="top:1707.58px"><span class="ln">83</span><span class="cd">    <span class="p">{</span></span></div>
<div class="r" style="top:1728.41px"><span class="ln">84</span><span class="cd">        <span class="ct">for</span> <span class="p">(</span><span class="t">size_t</span> <span class="l">i</span> <span class="p">=</span> <span class="n">0</span><span class="p">;</span> <span class="l">i</span> <span class="p">&lt;</span> <span class="g">people</span><span class="p">;</span> <span class="l">i</span><span class="p">++)</span></span></div>
<div class="r" style="top:1749.24px"><span class="ln">85</span><span class="cd">        <span class="p">{</span></span></div>
<div class="r" style="top:1770.07px"><span class="ln">86</span><span class="cd">            <span class="ct">for</span> <span class="p">(</span><span class="t">size_t</span> <span class="l">j</span> <span class="p">=</span> <span class="n">0</span><span class="p">;</span> <span class="l">j</span> <span class="p">&lt;</span> <span class="g">people</span><span class="p">;</span> <span class="l">j</span><span class="p">++)</span></span></div>
<div class="r" style="top:1790.89px"><span class="ln">87</span><span class="cd">            <span class="p">{</span></span></div>
<div class="r" style="top:1811.72px"><span class="ln">88</span><span class="cd">                <span class="ct">if</span> <span class="p">(</span><span class="g">S</span><span class="p">[</span><span class="l">i</span><span class="p">].</span><span class="m">number</span> <span class="p">&lt;</span> <span class="g">S</span><span class="p">[</span><span class="l">j</span><span class="p">].</span><span class="m">number</span><span class="p">)</span></span></div>
<div class="r" style="top:1832.55px"><span class="ln">89</span><span class="cd">                <span class="p">{</span></span></div>
<div class="r" style="top:1853.38px"><span class="ln">90</span><span class="cd">                    <span class="g">temp</span><span class="p">.</span><span class="m">number</span> <span class="p">=</span> <span class="g">S</span><span class="p">[</span><span class="l">i</span><span class="p">].</span><span class="m">number</span><span class="p">;</span></span></div>
<div class="r" style="top:1874.21px"><span class="ln">91</span><span class="cd">                    <span class="g">S</span><span class="p">[</span><span class="l">i</span><span class="p">].</span><span class="m">number</span> <span class="p">=</span> <span class="g">S</span><span class="p">[</span><span class="l">j</span><span class="p">].</span><span class="m">number</span><span class="p">;</span></span></div>
<div class="r" style="top:1895.04px"><span class="ln">92</span><span class="cd">                    <span class="g">S</span><span class="p">[</span><span class="l">j</span><span class="p">].</span><span class="m">number</span> <span class="p">=</span> <span class="g">temp</span><span class="p">.</span><span class="m">number</span><span class="p">;</span></span></div>
<div class="r" style="top:1915.87px"><span class="ln">93</span><span class="cd">                    <span class="f">strcpy</span><span class="p">(</span><span class="g">temp</span><span class="p">.</span><span class="m">name</span><span class="p">,</span> <span class="g">S</span><span class="p">[</span><span class="l">i</span><span class="p">].</span><span class="m">name</span><span class="p">);</span>        <span class="c">//<span class="z">信息交换</span></span></span></div>
<div class="r" style="top:1936.70px"><span class="ln">94</span><span class="cd">                    <span class="f">strcpy</span><span class="p">(</span><span class="g">S</span><span class="p">[</span><span class="l">i</span><span class="p">].</span><span class="m">name</span><span class="p">,</span> <span class="g">S</span><span class="p">[</span><span class="l">j</span><span class="p">].</span><span class="m">name</span><span class="p">);</span></span></div>
<div class="r" style="top:1957.53px"><span class="ln">95</span><span class="cd">                    <span class="f">strcpy</span><span class="p">(</span><span class="g">S</span><span class="p">[</span><span class="l">j</span><span class="p">].</span><span class="m">name</span><span class="p">,</span> <span class="g">temp</span><span class="p">.</span><span class="m">name</span><span class="p">);</span></span></div>
<div class="r" style="top:1978.36px"><span class="ln">96</span><span class="cd">                    <span class="f">strcpy</span><span class="p">(</span><span class="g">temp</span><span class="p">.</span><span class="m">contact_number</span><span class="p">,</span> <span class="g">S</span><span class="p">[</span><span class="l">i</span><span class="p">].</span><span class="m">contact_number</span><span class="p">);</span></span></div>
<div class="r" style="top:1999.18px"><span class="ln">97</span><span class="cd">                    <span class="f">strcpy</span><span class="p">(</span><span class="g">S</span><span class="p">[</span><span class="l">i</span><span class="p">].</span><span class="m">contact_number</span><span class="p">,</span> <span class="g">S</span><span class="p">[</span><span class="l">j</span><span class="p">].</span><span class="m">contact_number</span><span class="p">);</span></span></div>
<div class="r" style="top:2020.01px"><span class="ln">98</span><span class="cd">                    <span class="f">strcpy</span><span class="p">(</span><span class="g">S</span><span class="p">[</span><span class="l">i</span><span class="p">].</span><span class="m">contact_number</span><span class="p">,</span> <span class="g">temp</span><span class="p">.</span><span class="m">contact_number</span><span class="p">);</span></span></div>
<div class="r" style="top:2040.84px"><span class="ln">99</span><span class="cd"></span></div>
<div class="r" style="top:2061.67px"><span class="ln">100</span><span class="cd">                <span class="p">}</span></span></div>
<div class="r" style="top:2082.50px"><span class="ln">101</span><span class="cd">            <span class="p">}</span></span></div>
<div class="r" style="top:2103.33px"><span class="ln">102</span><span class="cd">        <span class="p">}</span></span></div>
<div class="r" style="top:2124.16px"><span class="ln">103</span><span class="cd">    <span class="p">}</span></span></div>
<div class="r" style="top:2144.99px"><span class="ln">104</span><span class="cd"></span></div>
<div class="r" style="top:2165.82px"><span class="ln">105</span><span class="cd">    <span class="c">//<span class="z">输出</span></span></span></div>
<div class="r" style="top:2186.64px"><span class="ln">106</span><span class="cd">    <span class="ct">if</span> <span class="p">(</span><span class="g">people</span> <span class="p">!=</span> <span class="n">0</span><span class="p">)</span></span></div>
<div class="r" style="top:2207.47px"><span class="ln">107</span><span class="cd">    <span class="p">{</span></span></div>
<div class="r" style="top:2228.30px"><span class="ln">108</span><span class="cd">        <span class="ct">for</span> <span class="p">(</span><span class="k">int</span> <span class="l">i</span> <span class="p">=</span> <span class="n">0</span><span class="p">;</span> <span class="l">i</span> <span class="p">&lt;</span> <span class="g">people</span><span class="p">;</span> <span class="l">i</span><span class="p">++)</span></span></div>
<div class="r" style="top:2249.13px"><span class="ln">109</span><span class="cd">        <span class="p">{</span></span></div>
<div class="r" style="top:2269.96px"><span class="ln">110</span><span class="cd">            <span class="f">printf</span><span class="p">(</span><span class="s">"<span class="z">编号：</span> %d | <span class="z">姓名</span>: %s | <span class="z">电话</span>: %s</span><span class="e">\n</span><span class="s">"</span><span class="p">,</span> <span class="g">S</span><span class="p">[</span><span class="l">i</span><span class="p">].</span><span class="m">number</span><span class="p">,</span> <span class="g">S</span><span class="p">[</span><span class="l">i</span><span class="p">].</span><span class="m">name</span><span class="p">,</span> <span class="g">S</span><span class="p">[</span><span class="l">i</span><span class="p">].</span><span class="m">contact_number</span><span class="p">);</span></span></div>
<div class="r" style="top:2290.79px"><span class="ln">111</span><span class="cd">        <span class="p">}</span></span></div>
<div class="r" style="top:2311.62px"><span class="ln">112</span><span class="cd">    <span class="p">}</span></span></div>
<div class="r" style="top:2332.45px"><span class="ln">113</span><span class="cd"><span class="p">}</span></span></div>
<div class="r" style="top:2353.28px"><span class="ln">114</span><span class="cd"></span></div>
<div class="r" style="top:2374.11px"><span class="ln">115</span><span class="cd"><span class="c">//<span class="z">添加</span></span></span></div>
<div class="r" style="top:2394.93px"><span class="ln">116</span><span class="cd"><span class="k">void</span> <span class="f">add</span><span class="p">()</span></span></div>
<div class="r" style="top:2415.76px"><span class="ln">117</span><span class="cd"><span class="p">{</span></span></div>
<div class="r" style="top:2436.59px"><span class="ln">118</span><span class="cd">    <span class="k">int</span> <span class="l">flag</span> <span class="p">=</span> <span class="n">1</span><span class="p">;</span></span></div>
<div class="r" style="top:2457.42px"><span class="ln">119</span><span class="cd">    <span class="ct">if</span> <span class="p">(</span><span class="g">remaining_space</span> <span class="p">==</span> <span class="n">0</span><span class="p">)</span></span></div>
<div class="r" style="top:2478.25px"><span class="ln">120</span><span class="cd">    <span class="p">{</span></span></div>
<div class="r" style="top:2499.08px"><span class="ln">121</span><span class="cd">        <span class="f">printf</span><span class="p">(</span><span class="s">"<span class="z">通讯录已满</span></span><span class="e">\n</span><span class="s">"</span><span class="p">);</span></span></div>
<div class="r" style="top:2519.91px"><span class="ln">122</span><span class="cd">    <span class="p">}</span></span></div>
<div class="r" style="top:2540.74px"><span class="ln">123</span><span class="cd">    <span class="ct">else</span> <span class="ct">if</span> <span class="p">(</span><span class="l">flag</span> <span class="p">!=</span> <span class="n">0</span><span class="p">)</span></span></div>
<div class="r" style="top:2561.57px"><span class="ln">124</span><span class="cd">    <span class="p">{</span></span></div>
<div class="r" style="top:2582.40px"><span class="ln">125</span><span class="cd">        <span class="f">printf</span><span class="p">(</span><span class="s">"<span class="z">添加操作：</span></span><span class="e">\n</span><span class="s"><span class="z">请输入添加位置</span>:"</span><span class="p">);</span></span></div>
<div class="r" style="top:2603.22px"><span class="ln">126</span><span class="cd">        <span class="f">scanf</span><span class="p">(</span><span class="s">"%d"</span><span class="p">,</span> <span class="p">&amp;</span><span class="g">S</span><span class="p">[</span><span class="g">people</span><span class="p">].</span><span class="m">number</span><span class="p">);</span></span></div>
<div class="r" style="top:2624.05px"><span class="ln">127</span><span class="cd">        <span class="ct">if</span> <span class="p">(</span><span class="g">S</span><span class="p">[</span><span class="g">people</span><span class="p">].</span><span class="m">number</span> <span class="p">&gt;</span> <span class="n">50</span><span class="p">)</span></span></div>
<div class="r" style="top:2644.88px"><span class="ln">128</span><span class="cd">        <span class="p">{</span></span></div>
<div class="r" style="top:2665.71px"><span class="ln">129</span><span class="cd">            <span class="f">printf</span><span class="p">(</span><span class="s">"<span class="z">处理编号超过阈值</span>"</span><span class="p">);</span></span></div>
<div class="r" style="top:2686.54px"><span class="ln">130</span><span class="cd">            <span class="f">_getch</span><span class="p">();</span></span></div>
<div class="r" style="top:2707.37px"><span class="ln">131</span><span class="cd">            <span class="l">flag</span> <span class="p">=</span> <span class="n">0</span><span class="p">;</span></span></div>
<div class="r" style="top:2728.20px"><span class="ln">132</span><span class="cd">        <span class="p">}</span></span></div>
<div class="r" style="top:2749.03px"><span class="ln">133</span><span class="cd">        <span class="ct">for</span> <span class="p">(</span><span class="t">size_t</span> <span class="l">i</span> <span class="p">=</span> <span class="n">0</span><span class="p">;</span> <span class="l">i</span> <span class="p">&lt;</span> <span class="g">people</span><span class="p">;</span> <span class="l">i</span><span class="p">++)</span></span></div>
<div class="r" style="top:2769.86px"><span class="ln">134</span><span class="cd">        <span class="p">{</span></span></div>
<div class="r" style="top:2790.69px"><span class="ln">135</span><span class="cd">            <span class="ct">if</span> <span class="p">(</span><span class="g">S</span><span class="p">[</span><span class="l">i</span><span class="p">].</span><span class="m">number</span> <span class="p">==</span> <span class="g">S</span><span class="p">[</span><span class="g">people</span><span class="p">].</span><span class="m">number</span><span class="p">)</span></span></div>
<div class="r" style="top:2811.51px"><span class="ln">136</span><span class="cd">            <span class="p">{</span></span></div>
<div class="r" style="top:2832.34px"><span class="ln">137</span><span class="cd">                <span class="f">printf</span><span class="p">(</span><span class="s">"<span class="z">此处已有数据</span>"</span><span class="p">);</span></span></div>
<div class="r" style="top:2853.17px"><span class="ln">138</span><span class="cd">                <span class="f">_getch</span><span class="p">();</span></span></div>
<div class="r" style="top:2874.00px"><span class="ln">139</span><span class="cd">                <span class="l">flag</span> <span class="p">=</span> <span class="n">0</span><span class="p">;</span></span></div>
<div class="r" style="top:2894.83px"><span class="ln">140</span><span class="cd">            <span class="p">}</span></span></div>
<div class="r" style="top:2915.66px"><span class="ln">141</span><span class="cd">        <span class="p">}</span></span></div>
<div class="r" style="top:2936.49px"><span class="ln">142</span><span class="cd">        <span class="ct">if</span> <span class="p">(</span><span class="l">flag</span> <span class="p">!=</span> <span class="n">0</span><span class="p">)</span></span></div>
<div class="r" style="top:2957.32px"><span class="ln">143</span><span class="cd">        <span class="p">{</span></span></div>
<div class="r" style="top:2978.15px"><span class="ln">144</span><span class="cd">            <span class="f">printf</span><span class="p">(</span><span class="s">"<span class="z">请输入联系人姓名</span>:"</span><span class="p">);</span></span></div>
<div class="r" style="top:2998.98px"><span class="ln">145</span><span class="cd">            <span class="f">scanf</span><span class="p">(</span><span class="s">"%s"</span><span class="p">,</span> <span class="p">&amp;</span><span class="g">S</span><span class="p">[</span><span class="g">people</span><span class="p">].</span><span class="m">name</span><span class="p">);</span></span></div>
<div class="r" style="top:3019.80px"><span class="ln">146</span><span class="cd">            <span class="f">printf</span><span class="p">(</span><span class="s">"<span class="z">请输入联系人电话</span>:"</span><span class="p">);</span></span></div>
<div class="r" style="top:3040.63px"><span class="ln">147</span><span class="cd">            <span class="f">scanf</span><span class="p">(</span><span class="s">"%s"</span><span class="p">,</span> <span class="p">&amp;</span><span class="g">S</span><span class="p">[</span><span class="g">people</span><span class="p">].</span><span class="m">contact_number</span><span class="p">);</span></span></div>
<div class="r" style="top:3061.46px"><span class="ln">148</span><span class="cd">            <span class="g">people</span><span class="p">++;</span></span></div>
<div class="r" style="top:3082.29px"><span class="ln">149</span><span class="cd">            <span class="g">remaining_space</span><span class="p">--;</span></span></div>
<div class="r" style="top:3103.12px"><span class="ln">150</span><span class="cd">        <span class="p">}</span></span></div>
<div class="r" style="top:3123.95px"><span class="ln">151</span><span class="cd">    <span class="p">}</span></span></div>
<div class="r" style="top:3144.78px"><span class="ln">152</span><span class="cd"><span class="p">}</span></span></div>
<div class="r" style="top:3165.61px"><span class="ln">153</span><span class="cd"></span></div>
<div class="r" style="top:3186.44px"><span class="ln">154</span><span class="cd"><span class="c">//<span class="z">删除</span></span></span></div>
<div class="r" style="top:3207.27px"><span class="ln">155</span><span class="cd"><span class="k">void</span> <span class="f">delete_</span><span class="p">()</span></span></div>
<div class="r" style="top:3228.09px"><span class="ln">156</span><span class="cd"><span class="p">{</span></span></div>
<div class="r" style="top:3248.92px"><span class="ln">157</span><span class="cd">    <span class="k">int</span> <span class="l">n</span><span class="p">,</span> <span class="l">flag</span> <span class="p">=</span> <span class="n">1</span><span class="p">;</span></span></div>
<div class="r" style="top:3269.75px"><span class="ln">158</span><span class="cd">    <span class="f">printf</span><span class="p">(</span><span class="s">"<span class="z">删除操作：</span></span><span class="e">\n</span><span class="s"><span class="z">请输入删除位置：</span>"</span><span class="p">);</span></span></div>
<div class="r" style="top:3290.58px"><span class="ln">159</span><span class="cd">    <span class="f">scanf</span><span class="p">(</span><span class="s">"%d"</span><span class="p">,</span> <span class="p">&amp;</span><span class="l">n</span><span class="p">);</span></span></div>
<div class="r" style="top:3311.41px"><span class="ln">160</span><span class="cd">    <span class="ct">if</span> <span class="p">(</span><span class="l">n</span> <span class="p">&gt;</span> <span class="n">50</span><span class="p">)</span></span></div>
<div class="r" style="top:3332.24px"><span class="ln">161</span><span class="cd">    <span class="p">{</span></span></div>
<div class="r" style="top:3353.07px"><span class="ln">162</span><span class="cd">        <span class="f">printf</span><span class="p">(</span><span class="s">"<span class="z">处理编号超过阈值</span>"</span><span class="p">);</span></span></div>
<div class="r" style="top:3373.90px"><span class="ln">163</span><span class="cd">        <span class="l">flag</span> <span class="p">=</span> <span class="n">0</span><span class="p">;</span></span></div>
<div class="r" style="top:3394.73px"><span class="ln">164</span><span class="cd">        <span class="f">_getch</span><span class="p">();</span></span></div>
<div class="r" style="top:3415.56px"><span class="ln">165</span><span class="cd">    <span class="p">}</span></span></div>
<div class="r" style="top:3436.39px"><span class="ln">166</span><span class="cd">    <span class="ct">for</span> <span class="p">(</span><span class="t">size_t</span> <span class="l">i</span> <span class="p">=</span> <span class="n">0</span><span class="p">;</span> <span class="l">i</span> <span class="p">&lt;=</span> <span class="g">people</span><span class="p">;</span> <span class="l">i</span><span class="p">++)</span></span></div>
<div class="r" style="top:3457.21px"><span class="ln">167</span><span class="cd">    <span class="p">{</span></span></div>
<div class="r" style="top:3478.04px"><span class="ln">168</span><span class="cd">        <span class="ct">if</span> <span class="p">(</span><span class="l">n</span> <span class="p">==</span> <span class="g">S</span><span class="p">[</span><span class="l">i</span><span class="p">].</span><span class="m">number</span><span class="p">)</span></span></div>
<div class="r" style="top:3498.87px"><span class="ln">169</span><span class="cd">        <span class="p">{</span></span></div>
<div class="r" style="top:3519.70px"><span class="ln">170</span><span class="cd">            <span class="c">//memset(&amp;S[n], 0, sizeof(MyStruct));   //<span class="z">结构体数据某一组信息删除</span></span></span></div>
<div class="r" style="top:3540.53px"><span class="ln">171</span><span class="cd">            <span class="ct">for</span> <span class="p">(</span><span class="t">size_t</span> <span class="l">j</span> <span class="p">=</span> <span class="n">0</span><span class="p">;</span> <span class="l">j</span> <span class="p">&lt;</span> <span class="n">49</span><span class="p">;</span> <span class="l">j</span><span class="p">++)</span></span></div>
<div class="r" style="top:3561.36px"><span class="ln">172</span><span class="cd">            <span class="p">{</span></span></div>
<div class="r" style="top:3582.19px"><span class="ln">173</span><span class="cd">                <span class="g">S</span><span class="p">[</span><span class="l">j</span><span class="p">]</span> <span class="p">=</span> <span class="g">S</span><span class="p">[</span><span class="l">j</span> <span class="p">+</span> <span class="n">1</span><span class="p">];</span></span></div>
<div class="r" style="top:3603.02px"><span class="ln">174</span><span class="cd">            <span class="p">}</span></span></div>
<div class="r" style="top:3623.85px"><span class="ln">175</span><span class="cd">            <span class="g">people</span><span class="p">--;</span></span></div>
<div class="r" style="top:3644.68px"><span class="ln">176</span><span class="cd">            <span class="g">remaining_space</span><span class="p">++;</span></span></div>
<div class="r" style="top:3665.50px"><span class="ln">177</span><span class="cd">            <span class="l">flag</span> <span class="p">=</span> <span class="n">0</span><span class="p">;</span></span></div>
<div class="r" style="top:3686.33px"><span class="ln">178</span><span class="cd">        <span class="p">}</span></span></div>
<div class="r" style="top:3707.16px"><span class="ln">179</span><span class="cd">    <span class="p">}</span></span></div>
<div class="r" style="top:3727.99px"><span class="ln">180</span><span class="cd">    <span class="ct">if</span> <span class="p">(</span><span class="l">flag</span> <span class="p">!=</span> <span class="n">0</span><span class="p">)</span></span></div>
<div class="r" style="top:3748.82px"><span class="ln">181</span><span class="cd">    <span class="p">{</span></span></div>
<div class="r" style="top:3769.65px"><span class="ln">182</span><span class="cd">        <span class="f">printf</span><span class="p">(</span><span class="s">"<span class="z">此处无数据</span>"</span><span class="p">);</span></span></div>
<div class="r" style="top:3790.48px"><span class="ln">183</span><span class="cd">        <span class="f">_getch</span><span class="p">();</span></span></div>
<div class="r" style="top:3811.31px"><span class="ln">184</span><span class="cd">    <span class="p">}</span></span></div>
<div class="r" style="top:3832.14px"><span class="ln">185</span><span class="cd"><span class="p">}</span></span></div>
<div class="r" style="top:3852.97px"><span class="ln">186</span><span class="cd"></span></div>
<div class="r" style="top:3873.79px"><span class="ln">187</span><span class="cd"><span class="c">//<span class="z">修改</span></span></span></div>
<div class="r" style="top:3894.62px"><span class="ln">188</span><span class="cd"><span class="k">void</span> <span class="f">modify</span><span class="p">()</span></span></div>
<div class="r" style="top:3915.45px"><span class="ln">189</span><span class="cd"><span class="p">{</span></span></div>
<div class="r" style="top:3936.28px"><span class="ln">190</span><span class="cd">    <span class="k">int</span> <span class="l">i</span><span class="p">,</span> <span class="l">flag</span> <span class="p">=</span> <span class="n">1</span><span class="p">,</span> <span class="l">n</span><span class="p">;</span></span></div>
<div class="r" style="top:3957.11px"><span class="ln">191</span><span class="cd">    <span class="k">char</span> <span class="l">name</span><span class="p">[</span><span class="n">10</span><span class="p">];</span></span></div>
<div class="r" style="top:3977.94px"><span class="ln">192</span><span class="cd">    <span class="k">char</span> <span class="l">contact_number</span><span class="p">[</span><span class="n">12</span><span class="p">];</span></span></div>
<div class="r" style="top:3998.77px"><span class="ln">193</span><span class="cd">    <span class="f">printf</span><span class="p">(</span><span class="s">"<span class="z">修改操作</span></span><span class="e">\n</span><span class="s"><span class="z">请输入修改位置：</span>"</span><span class="p">);</span></span></div>
<div class="r" style="top:4019.60px"><span class="ln">194</span><span class="cd">    <span class="f">scanf</span><span class="p">(</span><span class="s">"%d"</span><span class="p">,</span> <span class="p">&amp;</span><span class="l">n</span><span class="p">);</span></span></div>
<div class="r" style="top:4040.43px"><span class="ln">195</span><span class="cd">    <span class="ct">if</span> <span class="p">(</span><span class="l">n</span> <span class="p">&gt;</span> <span class="n">50</span><span class="p">)</span></span></div>
<div class="r" style="top:4061.26px"><span class="ln">196</span><span class="cd">    <span class="p">{</span></span></div>
<div class="r" style="top:4082.08px"><span class="ln">197</span><span class="cd">        <span class="f">printf</span><span class="p">(</span><span class="s">"<span class="z">处理编号超过阈值</span>"</span><span class="p">);</span></span></div>
<div class="r" style="top:4102.91px"><span class="ln">198</span><span class="cd">        <span class="f">_getch</span><span class="p">();</span></span></div>
<div class="r" style="top:4123.74px"><span class="ln">199</span><span class="cd">        <span class="l">flag</span> <span class="p">=</span> <span class="n">0</span><span class="p">;</span></span></div>
<div class="r" style="top:4144.57px"><span class="ln">200</span><span class="cd">    <span class="p">}</span></span></div>
<div class="r" style="top:4165.40px"><span class="ln">201</span><span class="cd">    <span class="ct">else</span></span></div>
<div class="r" style="top:4186.23px"><span class="ln">202</span><span class="cd">    <span class="p">{</span></span></div>
<div class="r" style="top:4207.06px"><span class="ln">203</span><span class="cd">        <span class="ct">for</span> <span class="p">(</span><span class="l">i</span> <span class="p">=</span> <span class="n">0</span><span class="p">;</span> <span class="l">i</span> <span class="p">&lt;</span> <span class="g">people</span><span class="p">;</span> <span class="l">i</span><span class="p">++)</span></span></div>
<div class="r" style="top:4227.89px"><span class="ln">204</span><span class="cd">        <span class="p">{</span></span></div>
<div class="r" style="top:4248.72px"><span class="ln">205</span><span class="cd">            <span class="ct">if</span> <span class="p">(</span><span class="l">n</span> <span class="p">==</span> <span class="g">S</span><span class="p">[</span><span class="l">i</span><span class="p">].</span><span class="m">number</span><span class="p">)</span></span></div>
<div class="r" style="top:4269.55px"><span class="ln">206</span><span class="cd">            <span class="p">{</span></span></div>
<div class="r" style="top:4290.37px"><span class="ln">207</span><span class="cd">                <span class="f">printf</span><span class="p">(</span><span class="s">"<span class="z">已擦除原有信息，请重新键入</span></span><span class="e">\n</span><span class="s">"</span><span class="p">);</span></span></div>
<div class="r" style="top:4311.20px"><span class="ln">208</span><span class="cd">                <span class="f">printf</span><span class="p">(</span><span class="s">"<span class="z">请输入联系人姓名</span>:"</span><span class="p">);</span></span></div>
<div class="r" style="top:4332.03px"><span class="ln">209</span><span class="cd">                <span class="f">scanf</span><span class="p">(</span><span class="s">"%s"</span><span class="p">,</span> <span class="p">&amp;</span><span class="l">name</span><span class="p">);</span></span></div>
<div class="r" style="top:4352.86px"><span class="ln">210</span><span class="cd">                <span class="f">strcpy</span><span class="p">(</span><span class="g">S</span><span class="p">[</span><span class="l">i</span><span class="p">].</span><span class="m">name</span><span class="p">,</span> <span class="l">name</span><span class="p">);</span></span></div>
<div class="r" style="top:4373.69px"><span class="ln">211</span><span class="cd">                <span class="f">printf</span><span class="p">(</span><span class="s">"<span class="z">请输入联系人电话</span>:"</span><span class="p">);</span></span></div>
<div class="r" style="top:4394.52px"><span class="ln">212</span><span class="cd">                <span class="f">scanf</span><span class="p">(</span><span class="s">"%s"</span><span class="p">,</span> <span class="p">&amp;</span><span class="l">contact_number</span><span class="p">);</span></span></div>
<div class="r" style="top:4415.35px"><span class="ln">213</span><span class="cd">                <span class="f">strcpy</span><span class="p">(</span><span class="g">S</span><span class="p">[</span><span class="l">i</span><span class="p">].</span><span class="m">contact_number</span><span class="p">,</span> <span class="l">contact_number</span><span class="p">);</span></span></div>
<div class="r" style="top:4436.18px"><span class="ln">214</span><span class="cd">                <span class="l">flag</span> <span class="p">=</span> <span class="n">0</span><span class="p">;</span></span></div>
<div class="r" style="top:4457.01px"><span class="ln">215</span><span class="cd">            <span class="p">}</span></span></div>
<div class="r" style="top:4477.84px"><span class="ln">216</span><span class="cd">        <span class="p">}</span></span></div>
<div class="r" style="top:4498.66px"><span class="ln">217</span><span class="cd">        <span class="ct">if</span> <span class="p">(</span><span class="l">flag</span> <span class="p">==</span> <span class="n">1</span><span class="p">)</span></span></div>
<div class="r" style="top:4519.49px"><span class="ln">218</span><span class="cd">        <span class="p">{</span></span></div>
<div class="r" style="top:4540.32px"><span class="ln">219</span><span class="cd">            <span class="f">printf</span><span class="p">(</span><span class="s">"<span class="z">此处无数据</span>"</span><span class="p">);</span></span></div>
<div class="r" style="top:4561.15px"><span class="ln">220</span><span class="cd">            <span class="f">_getch</span><span class="p">();</span></span></div>
<div class="r" style="top:4581.98px"><span class="ln">221</span><span class="cd">        <span class="p">}</span></span></div>
<div class="r" style="top:4602.81px"><span class="ln">222</span><span class="cd">    <span class="p">}</span></span></div>
<div class="r" style="top:4623.64px"><span class="ln">223</span><span class="cd"><span class="p">}</span></span></div>
</body></html>
